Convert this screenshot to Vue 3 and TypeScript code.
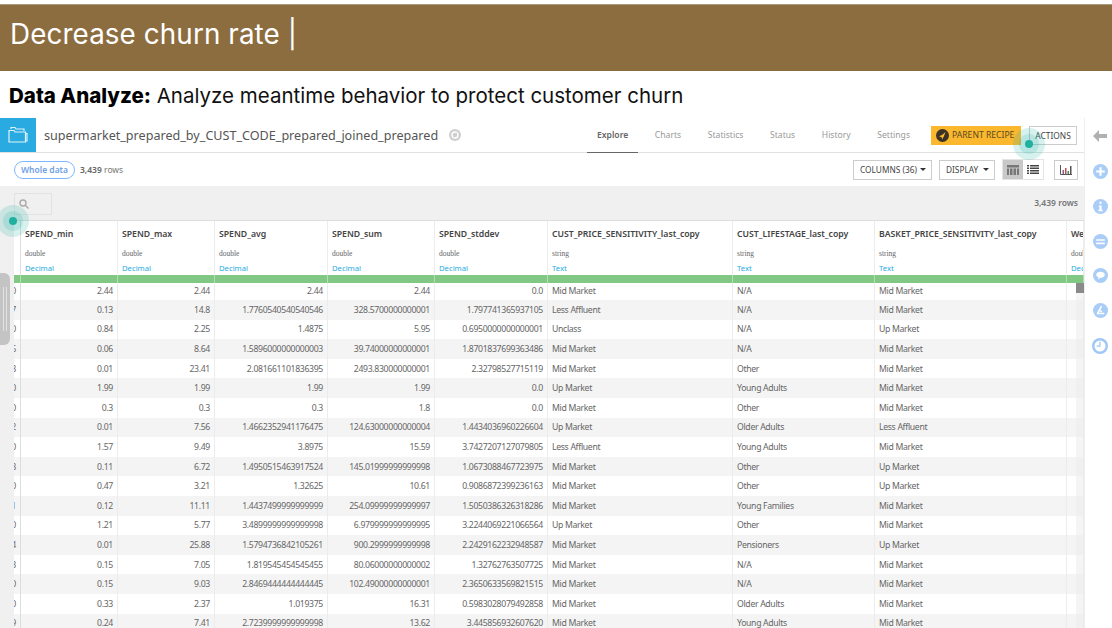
<script setup lang="ts">
const tabs = ['Explore', 'Charts', 'Statistics', 'Status', 'History', 'Settings']

const columns = [
  { name: 'SPEND_min', type: 'double', meaning: 'Decimal' },
  { name: 'SPEND_max', type: 'double', meaning: 'Decimal' },
  { name: 'SPEND_avg', type: 'double', meaning: 'Decimal' },
  { name: 'SPEND_sum', type: 'double', meaning: 'Decimal' },
  { name: 'SPEND_stddev', type: 'double', meaning: 'Decimal' },
  { name: 'CUST_PRICE_SENSITIVITY_last_copy', type: 'string', meaning: 'Text' },
  { name: 'CUST_LIFESTAGE_last_copy', type: 'string', meaning: 'Text' },
  { name: 'BASKET_PRICE_SENSITIVITY_last_copy', type: 'string', meaning: 'Text' },
  { name: 'Week', type: 'double', meaning: 'Decimal' },
]

const rows: string[][] = [
  ['0', '2.44', '2.44', '2.44', '2.44', '0.0', 'Mid Market', 'N/A', 'Mid Market'],
  ['7', '0.13', '14.8', '1.7760540540540546', '328.5700000000001', '1.797741365937105', 'Less Affluent', 'N/A', 'Mid Market'],
  ['0', '0.84', '2.25', '1.4875', '5.95', '0.6950000000000001', 'Unclass', 'N/A', 'Up Market'],
  ['6', '0.06', '8.64', '1.5896000000000003', '39.74000000000001', '1.8701837699363486', 'Mid Market', 'N/A', 'Mid Market'],
  ['8', '0.01', '23.41', '2.081661101836395', '2493.830000000001', '2.32798527715119', 'Mid Market', 'Other', 'Mid Market'],
  ['0', '1.99', '1.99', '1.99', '1.99', '0.0', 'Up Market', 'Young Adults', 'Mid Market'],
  ['0', '0.3', '0.3', '0.3', '1.8', '0.0', 'Mid Market', 'Other', 'Mid Market'],
  ['2', '0.01', '7.56', '1.4662352941176475', '124.63000000000004', '1.4434036960226604', 'Up Market', 'Older Adults', 'Less Affluent'],
  ['0', '1.57', '9.49', '3.8975', '15.59', '3.7427207127079805', 'Less Affluent', 'Young Adults', 'Mid Market'],
  ['8', '0.11', '6.72', '1.4950515463917524', '145.01999999999998', '1.0673088467723975', 'Mid Market', 'Other', 'Up Market'],
  ['0', '0.47', '3.21', '1.32625', '10.61', '0.9086872399236163', 'Mid Market', 'Other', 'Up Market'],
  ['1', '0.12', '11.11', '1.4437499999999999', '254.09999999999997', '1.5050386326318286', 'Mid Market', 'Young Families', 'Mid Market'],
  ['0', '1.21', '5.77', '3.4899999999999998', '6.979999999999995', '3.2244069221066564', 'Up Market', 'Other', 'Mid Market'],
  ['4', '0.01', '25.88', '1.5794736842105261', '900.2999999999998', '2.2429162232948587', 'Mid Market', 'Pensioners', 'Up Market'],
  ['3', '0.15', '7.05', '1.819545454545455', '80.06000000000002', '1.32762763507725', 'Mid Market', 'N/A', 'Mid Market'],
  ['0', '0.15', '9.03', '2.8469444444444445', '102.49000000000001', '2.3650633569821515', 'Mid Market', 'N/A', 'Mid Market'],
  ['0', '0.33', '2.37', '1.019375', '16.31', '0.5983028079492858', 'Mid Market', 'Older Adults', 'Mid Market'],
  ['9', '0.24', '7.41', '2.7239999999999998', '13.62', '3.445856932607620', 'Mid Market', 'Young Adults', 'Mid Market'],
]

function isText(i: number) {
  return i >= 6
}
</script>

<template>
  <div class="page">
    <div class="banner">Decrease churn rate |</div>
    <div class="subtitle"><b>Data Analyze:</b> Analyze meantime behavior to protect customer churn</div>

    <div class="app">
      <div class="main">
        <div class="topbar">
          <div class="folder">
            <svg width="20" height="18" viewBox="0 0 20 18" fill="none" stroke="#dff2fa" stroke-width="1.2">
              <path d="M3 3V1.500h4l1 1.500h8v2" />
              <path d="M1 16V4.500h5l1 1.500h10.500V16z" />
              <path d="M17.500 7.500H19V15h-1.500" />
            </svg>
          </div>
          <span class="dataset">supermarket_prepared_by_CUST_CODE_prepared_joined_prepared</span>
          <svg class="badge" width="12" height="12" viewBox="0 0 12 12">
            <circle cx="6" cy="6" r="6" fill="#cfcfcf" />
            <circle cx="6" cy="6" r="3" fill="none" stroke="#fff" stroke-width="1.400" />
            <path d="M4.500 8.500 8 3.500" stroke="#cfcfcf" stroke-width="1" />
          </svg>
          <nav class="tabs">
            <a v-for="(t, i) in tabs" :key="t" class="tab" :class="{ active: i === 0 }">{{ t }}</a>
          </nav>
          <button class="recipe">
            <svg width="13" height="13" viewBox="0 0 13 13">
              <circle cx="6.500" cy="6.500" r="6.500" fill="#3a3326" />
              <path d="M3 7.200 6 6l3.600-3-1.800 4.600-1.600 2.600-.6-2z" fill="#fbb82f" />
            </svg>
            PARENT RECIPE
          </button>
          <button class="actions">ACTIONS</button>
        </div>

        <div class="filterbar">
          <span class="pill">Whole data</span>
          <span class="count"><b>3,439</b> rows</span>
          <div class="controls">
            <button class="ctl columns">COLUMNS (36) <i class="caret"></i></button>
            <button class="ctl display">DISPLAY <i class="caret"></i></button>
            <div class="toggle">
              <span class="seg on">
                <svg width="12" height="10" viewBox="0 0 12 10" fill="#777">
                  <path d="M0 0h12v2.500H0zM0 3.500h2V10H0zM3 3.500h2.500V10H3zM6.500 3.500H9V10H6.500zM10 3.500h2V10h-2z" />
                </svg>
              </span>
              <span class="seg">
                <svg width="12" height="9" viewBox="0 0 12 9" fill="#444">
                  <path d="M0 0h2v1.500H0zM3 0h9v1.500H3zM0 2.500h2V4H0zM3 2.500h9V4H3zM0 5h2v1.500H0zM3 5h9v1.500H3zM0 7.500h2V9H0zM3 7.500h9V9H3z" />
                </svg>
              </span>
            </div>
            <button class="chart">
              <svg width="12" height="10" viewBox="0 0 12 10">
                <path d="M.5 0v9.500H12" fill="none" stroke="#555" />
                <path d="M2.500 5H4v4H2.500z" fill="#8a5a9a" />
                <path d="M5 3h1.500v6H5z" fill="#c0504d" />
                <path d="M7.500 6H9v3H7.500z" fill="#4f8f5a" />
                <path d="M10 1h1.500v8H10z" fill="#555" />
              </svg>
            </button>
          </div>
        </div>

        <div class="toolbar">
          <div class="search">
            <svg width="10" height="10" viewBox="0 0 10 10" fill="none" stroke="#aaa" stroke-width="1.400">
              <circle cx="4" cy="4" r="3" />
              <path d="m6.300 6.300 3.200 3.200" />
            </svg>
          </div>
          <span class="toolbar-count">3,439 rows</span>
        </div>

        <div class="table">
          <div class="row head">
            <div class="cell stub"></div>
            <div v-for="c in columns" :key="c.name" class="cell hcell">
              <div class="cname">{{ c.name }}</div>
              <div class="ctype">{{ c.type }}</div>
              <div class="cmeaning">{{ c.meaning }}</div>
            </div>
          </div>
          <div class="row quality">
            <div class="cell stub"></div>
            <div v-for="c in columns" :key="c.name" class="cell"></div>
          </div>
          <div v-for="(r, ri) in rows" :key="ri" class="row data" :class="{ odd: ri % 2 === 1, first: ri === 0 }">
            <div v-for="(v, i) in r" :key="i" class="cell" :class="[isText(i) ? 'text' : 'num', { stub: i === 0 }]">
              <span>{{ v }}</span>
            </div>
            <div class="cell"></div>
          </div>
          <div class="track"></div>
          <div class="thumb"></div>
        </div>
        <div class="handle"><i></i><i></i></div>
        <div class="pulse pulse-left"><i></i></div>
      </div>

      <aside class="side">
        <svg class="back" width="14" height="12" viewBox="0 0 14 12">
          <path d="M6 0 0 6l6 6V8h8V4H6z" fill="#b0b0b0" />
        </svg>
        <span class="sbtn"><svg width="15" height="15" viewBox="0 0 14 14"><circle cx="7" cy="7" r="7" fill="#a9cdf7" /><path d="M3 6h3V3h2v3h3v2H8v3H6V8H3z" fill="#fff" /></svg></span>
        <span class="sbtn"><svg width="15" height="15" viewBox="0 0 14 14"><circle cx="7" cy="7" r="7" fill="#a9cdf7" /><path d="M6 2.500h2v2H6zM5.500 6H8v4h1v1.500H5V10h1V7.500h-.5z" fill="#fff" /></svg></span>
        <span class="sbtn"><svg width="15" height="15" viewBox="0 0 14 14"><circle cx="7" cy="7" r="7" fill="#a9cdf7" /><path d="M3 4.800h8v1.600H3zM3 8h8v1.600H3z" fill="#fff" /></svg></span>
        <span class="sbtn"><svg width="15" height="15" viewBox="0 0 14 14"><circle cx="7" cy="7" r="7" fill="#a9cdf7" /><path d="M7 3.500c2.200 0 4 1.200 4 2.800s-1.800 2.800-4 2.800l-2.500 1.600.6-2C3.800 8.200 3 7.300 3 6.300c0-1.600 1.800-2.800 4-2.800z" fill="#fff" /></svg></span>
        <span class="sbtn"><svg width="15" height="15" viewBox="0 0 14 14"><circle cx="7" cy="7" r="7" fill="#a9cdf7" /><path d="M7.300 2.500 8.500 3.200 6.800 6.500c1 .3 1.700 1.100 1.900 2.100H7.500c-.2-.6-.7-1-1.300-1L5.500 9h5v1.500h-7V9.500z" fill="#fff" /></svg></span>
        <span class="sbtn"><svg width="16" height="16" viewBox="0 0 16 16"><circle cx="8" cy="8" r="8" fill="#9fc7f5" /><circle cx="8" cy="8" r="5.500" fill="#fff" /><path d="M7.200 3.800h1.300v4.900H4.600V7.400h2.600z" fill="#9fc7f5" /></svg></span>
      </aside>

      <div class="pulse pulse-top"><i></i></div>
    </div>
  </div>
</template>

<style scoped>
.page {
  width: 1112px;
  height: 628px;
  overflow: hidden;
  background: #fff;
  display: flex;
  flex-direction: column;
  font-family: "Noto Sans", sans-serif;
  color: #555;
}
.banner {
  margin-top: 4px;
  height: 67px;
  flex: none;
  background: #8c6d3f;
  border-top: 1px solid #a99a80;
  box-sizing: border-box;
  padding: 0 0 8px 10px;
  display: flex;
  align-items: center;
  color: #fff;
  font: 27.8px "Inter", sans-serif;
  letter-spacing: 0.1px;
}
.subtitle {
  height: 47px;
  flex: none;
  box-sizing: border-box;
  padding: 11px 0 0 9px;
  font: 20.5px/28px "Inter", sans-serif;
  color: #111;
  white-space: nowrap;
}
.subtitle b {
  font-weight: 800;
  color: #000;
}
.app {
  position: relative;
  flex: 1;
  min-height: 0;
  display: flex;
}
.main {
  position: relative;
  width: 1084px;
  flex: none;
  display: flex;
  flex-direction: column;
  background: #f0f0f0;
}
.topbar {
  height: 35px;
  flex: none;
  background: #fff;
  border-bottom: 1px solid #e2e2e2;
  box-sizing: border-box;
  display: flex;
  align-items: center;
}
.folder {
  width: 36px;
  height: 34px;
  background: #29abe2;
  display: flex;
  align-items: center;
  justify-content: center;
}
.dataset {
  margin-left: 8px;
  font-size: 12.6px;
  color: #555;
  white-space: nowrap;
}
.badge {
  margin-left: 11px;
}
.tabs {
  margin-left: auto;
  display: flex;
  gap: 6.6px;
  height: 100%;
}
.tab {
  padding: 0 10px 1px;
  display: flex;
  align-items: center;
  font-size: 8.6px;
  color: #999;
}
.tab.active {
  color: #666;
  font-weight: 600;
  border-bottom: 1px solid #666;
  margin-bottom: -1px;
}
.recipe {
  margin-left: 11px;
  height: 19px;
  width: 90px;
  border: 0;
  padding: 0 0 0 5px;
  display: flex;
  align-items: center;
  gap: 3px;
  background: #fbb82f;
  color: #5a4a20;
  font: 8.6px "Noto Sans", sans-serif;
  white-space: nowrap;
}
.actions {
  margin: 0 7px 0 8px;
  width: 48px;
  height: 19px;
  padding: 0;
  background: #fff;
  border: 1px solid #ccc;
  color: #444;
  font: 8.4px "Noto Sans", sans-serif;
}
.filterbar {
  height: 33px;
  flex: none;
  background: #fff;
  display: flex;
  align-items: center;
  padding: 0 6px 0 14px;
  box-sizing: border-box;
}
.pill {
  height: 18px;
  width: 61px;
  border: 1px solid #7db8ff;
  border-radius: 9px;
  box-sizing: border-box;
  display: flex;
  align-items: center;
  justify-content: center;
  font-size: 8.500px;
  font-weight: 600;
  color: #6f9fe8;
}
.count {
  margin-left: 5px;
  font-size: 8.500px;
  color: #777;
}
.count b {
  font-weight: 600;
  color: #666;
}
.controls {
  margin-left: auto;
  display: flex;
  align-items: center;
}
.ctl {
  height: 20px;
  padding: 0 5px 0 6px;
  display: flex;
  align-items: center;
  justify-content: space-between;
  background: #fff;
  border: 1px solid #ccc;
  color: #444;
  font: 8.3px "Noto Sans", sans-serif;
  margin-right: 7px;
  white-space: nowrap;
}
.columns {
  width: 79px;
}
.display {
  width: 56px;
}
.caret {
  width: 0;
  height: 0;
  border: 3px solid transparent;
  border-top: 3px solid #333;
  border-bottom: 0;
}
.toggle {
  display: flex;
  border: 1px solid #e4e4e4;
  height: 19px;
  margin-right: 10px;
}
.seg {
  width: 20px;
  display: flex;
  align-items: center;
  justify-content: center;
  background: #fff;
}
.seg.on {
  background: #c8c8c8;
}
.chart {
  width: 24px;
  height: 20px;
  padding: 0;
  display: flex;
  align-items: center;
  justify-content: center;
  background: #fff;
  border: 1px solid #ccc;
}
.toolbar {
  height: 34px;
  flex: none;
  box-sizing: border-box;
  display: flex;
  align-items: flex-start;
  justify-content: space-between;
  padding: 7px 6px 0 14px;
}
.search {
  width: 38px;
  height: 22px;
  box-sizing: border-box;
  border: 1px solid #e2e2e2;
  padding: 5px 0 0 4px;
}
.search svg {
  display: block;
}
.toolbar-count {
  margin-top: 4px;
  font-size: 8.500px;
  font-weight: 600;
  color: #777;
}
.table {
  position: relative;
  margin-left: 14px;
  flex: 1;
  min-height: 0;
  overflow: hidden;
  background: #fff;
  border-top: 1px solid #ddd;
}
.row {
  display: grid;
  grid-template-columns: 7px 97px 97px 113px 107px 113px 185px 142px 192px 17px;
}
.cell {
  min-width: 0;
  overflow: hidden;
  box-sizing: border-box;
  border-right: 1px solid #ececec;
  white-space: nowrap;
}
.stub {
  border-right: 1px solid #ddd;
}
.head {
  height: 54px;
}
.hcell {
  padding: 7px 0 0 4px;
}
.cname {
  font-size: 8.700px;
  font-weight: 600;
  line-height: 12px;
  color: #444;
}
.ctype {
  margin-top: 8px;
  font-family: "Liberation Serif", serif;
  font-size: 7.500px;
  line-height: 12px;
  color: #666;
}
.cmeaning {
  margin-top: 2px;
  font-size: 7.700px;
  line-height: 12px;
  color: #29abe2;
}
.quality {
  height: 8px;
  background: #82c885;
}
.quality .cell {
  border-right-color: #b4dcb6;
}
.data {
  height: 19.600px;
  font-size: 8.700px;
  letter-spacing: -0.33px;
  color: #666;
}
.data.first {
  height: 17px;
}
.data.first .cell {
  padding-bottom: 2px;
}
.data.odd {
  background: #f4f4f4;
}
.data .cell {
  display: flex;
  align-items: center;
}
.num {
  justify-content: flex-end;
  padding-right: 4px;
}
.text {
  padding-left: 4px;
}
.track {
  position: absolute;
  right: 0;
  top: 62px;
  bottom: 0;
  width: 8px;
  background: rgba(235, 235, 235, 0.5);
}
.thumb {
  position: absolute;
  right: 0;
  top: 62px;
  width: 8px;
  height: 10px;
  background: #8a8a8a;
}
.handle {
  position: absolute;
  left: 0;
  top: 155px;
  width: 10px;
  height: 72px;
  background: #c4c4c4;
  border-radius: 0 6px 6px 0;
  display: flex;
  align-items: center;
  justify-content: center;
  gap: 2px;
}
.handle i {
  width: 1px;
  height: 44px;
  background: #e2e2e2;
}
.pulse {
  position: absolute;
  width: 32px;
  height: 32px;
  border-radius: 50%;
  background: rgba(32, 178, 165, 0.18);
  display: flex;
  align-items: center;
  justify-content: center;
}
.pulse i {
  width: 8px;
  height: 8px;
  border-radius: 50%;
  background: #1fb0a0;
  box-shadow: 0 0 0 6px rgba(32, 178, 165, 0.18);
}
.pulse-left {
  left: -3px;
  top: 87px;
}
.pulse-top {
  left: 1013px;
  top: 10px;
}
.side {
  flex: 1;
  background: #fff;
  border-left: 1px solid #eee;
  display: flex;
  flex-direction: column;
  align-items: center;
  padding: 12px 0 0 3px;
}
.back {
  margin-bottom: 22px;
}
.sbtn {
  height: 34.800px;
  display: flex;
  align-items: flex-start;
  justify-content: center;
}
</style>
